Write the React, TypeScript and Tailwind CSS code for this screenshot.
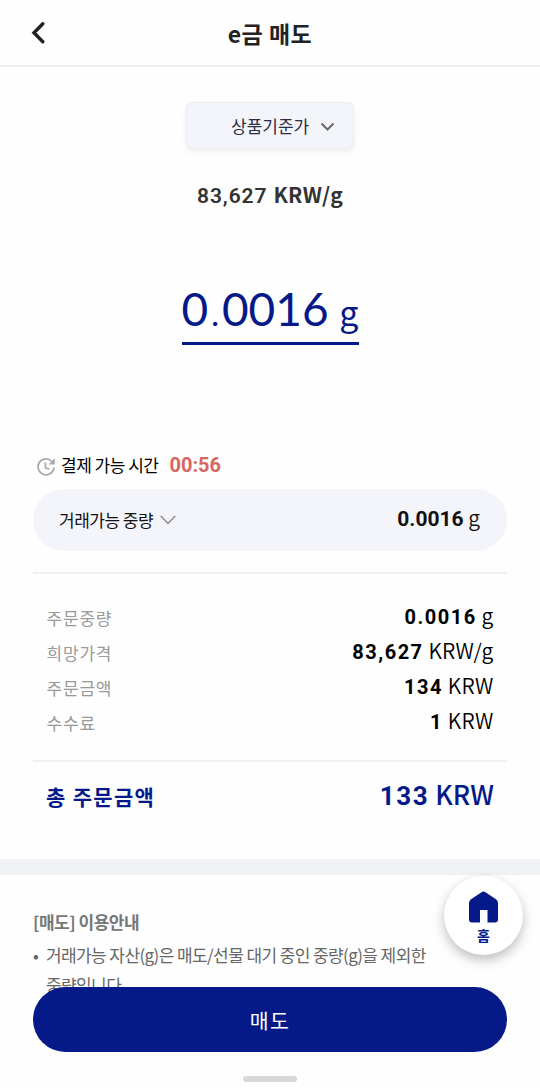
import React from "react";

const KR = "font-['Noto_Sans_CJK_KR',sans-serif]";
const NUM = "font-['Roboto','Noto_Sans_CJK_KR',sans-serif]";

const rows = [
  { label: "주문중량", value: "0.0016", unit: "g" },
  { label: "희망가격", value: "83,627", unit: "KRW/g" },
  { label: "주문금액", value: "134", unit: "KRW" },
  { label: "수수료", value: "1", unit: "KRW" },
];

function ClockIcon() {
  return (
    <svg className="mt-[3px] h-5 w-5 shrink-0" viewBox="0 0 20 20" fill="none" stroke="#a9a9a9" strokeWidth="1.7">
      <path d="M15.8 4.3A8 8 0 1 0 18 10.4" />
      <path d="M9.4 5.600v5.200l4 1.500" />
      <path d="M18.8 1.300v6.200h-6.200z" fill="#a9a9a9" stroke="none" />
    </svg>
  );
}

export default function App() {
  return (
    <div className={`relative flex h-[1088px] w-[540px] flex-col overflow-hidden bg-[#fefefe] text-black ${KR}`}>
      <header className="grid h-[67px] shrink-0 grid-cols-[90px_1fr_90px] items-center border-b-2 border-[#f0f0f0]">
        <svg className="mb-px ml-[30px] h-[24px] w-[18px]" viewBox="0 0 18 24" fill="none" stroke="#222" strokeWidth="3.4" strokeLinecap="round">
          <path d="M12.8 3.700 4 12.700l8.800 9" />
        </svg>
        <h1 className="text-center text-[23px] leading-[30px] font-bold tracking-[0.5px] text-[#222]">e금 매도</h1>
      </header>

      <main className="flex flex-col">
        <button className="mt-[35px] flex h-[47px] w-[168px] items-center self-center rounded-[6px] border border-[#ebedf2] bg-[#f4f5fa] pl-[44px] shadow-[0_3px_6px_rgba(0,0,0,0.06)]">
          <span className="text-[17px] leading-6 whitespace-nowrap text-[#2c2c44]">상품기준가</span>
          <svg className="mt-[2px] ml-[11px] h-[10px] w-[15px]" viewBox="0 0 15 10" fill="none" stroke="#6a6a6a" strokeWidth="2">
            <path d="m1.5 1.500 6 6 6-6" />
          </svg>
        </button>
        <p className="mt-[30px] h-[30px] text-center text-[21px] leading-[30px] font-bold tracking-[0.3px] text-[#333]">
          <span className={`${NUM} font-semibold tracking-[0.9px]`}>83,627</span>
          <span className="ml-px"> KRW/g</span>
        </p>
        <div className="mt-[71px] flex h-[65px] w-[177px] items-baseline justify-between self-center border-b-[3px] border-[#051a88] font-['Lato',sans-serif] leading-[58px] whitespace-nowrap text-[#051a88]">
          <span className="text-[46px]">
            0<span className="mx-[1.5px] font-light">.</span>0016
          </span>
          <span className={`text-[34px] ${KR}`}>g</span>
        </div>

        <section className="mt-[104px] px-[33px]">
          <div className="flex h-[40px] items-center pb-[8px] pl-[3px]">
            <ClockIcon />
            <span className="ml-[5px] text-[17px] tracking-[-0.5px] whitespace-nowrap">결제 가능 시간</span>
            <span className={`ml-[11px] text-[20px] font-bold text-[#d76662] ${NUM}`}>00:56</span>
          </div>
          <div className="flex h-[62px] items-center rounded-full bg-[#f4f5fa] pr-[27px] pl-[26px]">
            <span className="text-[17px] tracking-[-0.5px] text-[#111]">거래가능 중량</span>
            <svg className="ml-[7px] h-[10px] w-[16px]" viewBox="0 0 16 10" fill="none" stroke="#8b8b8b" strokeWidth="1.5">
              <path d="m.8 1 7.200 7.500L15.200 1" />
            </svg>
            <span className="mb-[5px] ml-auto text-[21px] leading-[30px] font-[350] text-[#111]">
              <span className={`text-[21px] font-bold ${NUM}`}>0.0016</span> g
            </span>
          </div>
          <dl className="mt-[21px] flex h-[190px] flex-col border-y-2 border-[#f0f0f0] px-[13px] pt-[24px]">
            {rows.map((r) => (
              <div key={r.label} className="flex h-[35px] items-center justify-between">
                <dt className="mt-[4px] ml-[0.5px] text-[17px] leading-6 tracking-[0.8px] text-[#999]">{r.label}</dt>
                <dd className="mr-[0.5px] text-[21px] leading-[30px] font-[350] tracking-[0.2px]">
                  <span className={`text-[20px] font-bold tracking-[1.5px] ${NUM}`}>{r.value}</span> {r.unit}
                </dd>
              </div>
            ))}
          </dl>
          <div className="flex h-[97px] justify-between px-[13px] pt-[13px] text-[#051a88]">
            <strong className="mt-[5px] text-[21px] leading-[32px] font-bold tracking-[1.3px]">총 주문금액</strong>
            <span className="text-[26.5px] leading-[38px]">
              <span className={`text-[26px] font-bold tracking-[1.6px] ${NUM}`}>133</span>
              <span className="font-medium"> KRW</span>
            </span>
          </div>
        </section>
        <div className="h-4 bg-[#f1f2f6]" />
        <section className="px-[33px] pt-[32px] text-[17px] leading-[30px] tracking-[-0.6px] text-[#666]">
          <h2 className="font-bold tracking-[-0.5px] text-[#777]">[매도] 이용안내</h2>
          <ul>
            <li className="flex pt-[3px]">
              <span className="w-[13px] shrink-0">•</span>
              <span className="whitespace-nowrap">
                거래가능 자산(g)은 매도/선물 대기 중인 중량(g)을 제외한
                <br />
                중량입니다.
              </span>
            </li>
          </ul>
        </section>
      </main>

      <div className="absolute inset-x-0 bottom-0 flex h-[101.5px] flex-col items-center">
        <button className="h-[65.5px] w-[474px] rounded-full bg-[#051a88] pt-[2px] text-[20.5px] tracking-[1.5px] text-white">매도</button>
        <div className="mt-[24px] h-[6px] w-[54px] rounded-full bg-[#d8d8d8]" />
      </div>
      <button className="absolute top-[876px] left-[444px] flex h-[79px] w-[79px] flex-col items-center rounded-full bg-white pt-[15px] text-[#051a88] shadow-[0_5px_12px_rgba(0,0,0,0.25)]">
        <svg className="h-[32px] w-[29px] shrink-0" viewBox="0 0 29 32" fill="currentColor">
          <path d="M12.5 1.200Q14.500 0 16.500 1.200L27 8.200Q29 9.600 29 12V28.500Q29 31.500 26 31.500H18.500V19H11V31.500H3Q0 31.500 0 28.500V12Q0 9.600 2 8.200Z" />
        </svg>
        <span className="mt-[3px] text-[14px] leading-[18px] font-bold">홈</span>
      </button>
    </div>
  );
}
